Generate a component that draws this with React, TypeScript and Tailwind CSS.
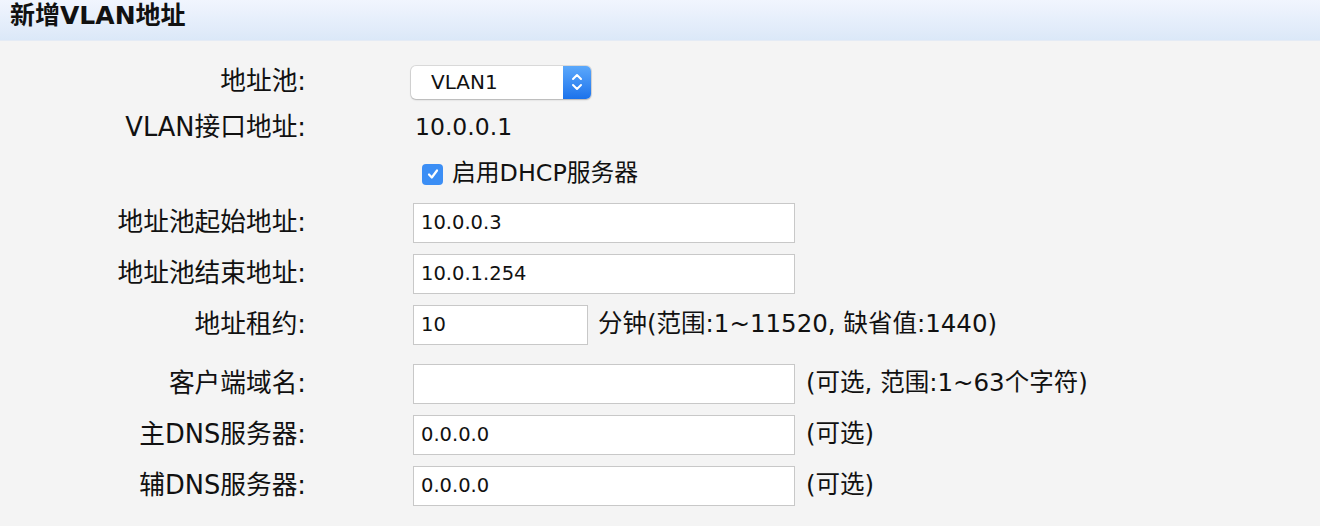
import type { ReactNode } from "react";

const font = "font-['DejaVu_Sans','Noto_Sans_CJK_SC',sans-serif]";

interface RowProps {
  label: string;
  tall?: boolean;
  children: ReactNode;
}

function Row({ label, tall, children }: RowProps) {
  return (
    <div className={`flex items-center ${tall ? "h-[51px]" : "h-[46px]"}`}>
      <div className="w-[306px] text-right text-[25.7px] leading-none whitespace-nowrap">
        {label}
      </div>
      <div className="ml-[107px] flex items-center">{children}</div>
    </div>
  );
}

function Field({ value, wide = true }: { value: string; wide?: boolean }) {
  return (
    <input
      readOnly
      value={value}
      className={`h-[40px] ${
        wide ? "w-[382px]" : "w-[175px]"
      } border border-[#c8c8c8] bg-white px-[7px] text-[19.5px] text-[#111] outline-none ${font}`}
    />
  );
}

function Hint({ text }: { text: string }) {
  return <span className="ml-[11px] text-[24.5px] leading-none whitespace-nowrap">{text}</span>;
}

export default function App() {
  return (
    <div className={`min-h-[526px] bg-[#f4f4f4] text-[#111] ${font}`}>
      <div className="h-[41px] border-b border-[#e4ebf5] bg-linear-to-b from-[#f1f5fe] to-[#dbe8f8] px-[10px] pt-[1px] text-[25px] font-bold leading-[29px]">
        新增VLAN地址
      </div>

      <div className="pt-[18px]">
        <Row label="地址池:">
          <div className="-ml-[2px] flex h-[33px] w-[180px] rounded-[5px] bg-white shadow-[0_0_0_1px_rgba(0,0,0,0.1),0_1px_2px_rgba(0,0,0,0.18)]">
            <span className="flex-1 pl-[20px] text-[20px] leading-[33px]">VLAN1</span>
            <span className="flex w-[28px] items-center justify-center rounded-r-[5px] bg-linear-to-b from-[#5ba8fb] to-[#1a72eb]">
              <svg width="14" height="22" viewBox="0 0 14 22" fill="none">
                <path d="M3 8l4-4 4 4" stroke="white" strokeWidth="2" strokeLinecap="round" strokeLinejoin="round" />
                <path d="M3 14l4 4 4-4" stroke="white" strokeWidth="2" strokeLinecap="round" strokeLinejoin="round" />
              </svg>
            </span>
          </div>
        </Row>

        <Row label="VLAN接口地址:">
          <span className="pl-[2px] text-[23.5px] leading-none">10.0.0.1</span>
        </Row>

        <div className="flex h-[46px] items-center pl-[422px]">
          <span className="flex h-[21px] w-[21px] items-center justify-center rounded-[4px] bg-[#3b8ef5]">
            <svg width="14" height="14" viewBox="0 0 14 14" fill="none">
              <path d="M3 7.5l2.8 3L11 3.5" stroke="white" strokeWidth="2.2" strokeLinecap="round" strokeLinejoin="round" />
            </svg>
          </span>
          <span className="ml-[9px] text-[23.8px] leading-none">启用DHCP服务器</span>
        </div>

        <Row label="地址池起始地址:" tall>
          <Field value="10.0.0.3" />
        </Row>
        <Row label="地址池结束地址:" tall>
          <Field value="10.0.1.254" />
        </Row>
        <Row label="地址租约:" tall>
          <Field value="10" wide={false} />
          <span className="ml-[10px] text-[24.5px] leading-none whitespace-nowrap">
            分钟(范围:1~11520, 缺省值:1440)
          </span>
        </Row>

        <div className="mt-[8px]">
          <Row label="客户端域名:" tall>
            <Field value="" />
            <Hint text="(可选, 范围:1~63个字符)" />
          </Row>
          <Row label="主DNS服务器:" tall>
            <Field value="0.0.0.0" />
            <Hint text="(可选)" />
          </Row>
          <Row label="辅DNS服务器:" tall>
            <Field value="0.0.0.0" />
            <Hint text="(可选)" />
          </Row>
        </div>
      </div>
    </div>
  );
}
